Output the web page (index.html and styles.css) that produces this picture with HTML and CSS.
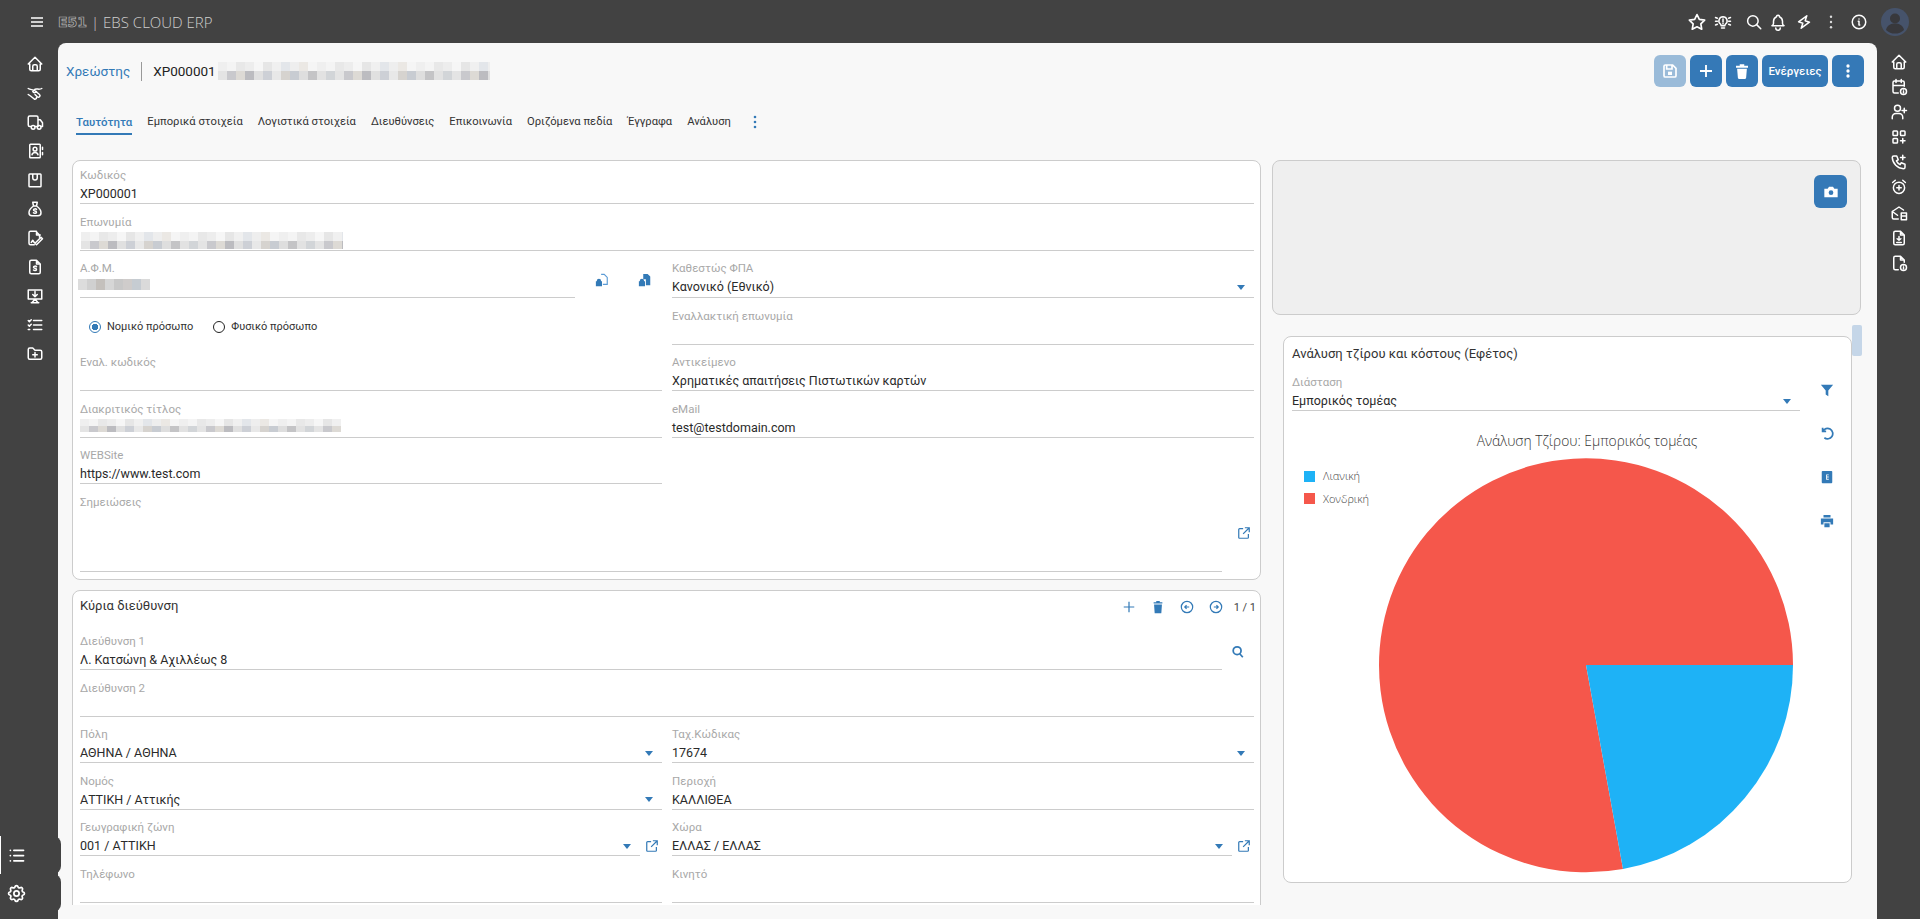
FILE: index.html
```html
<!DOCTYPE html>
<html lang="el">
<head>
    <meta charset="UTF-8">
    <title>Χρεώστης - EBS Cloud ERP</title>
    <link rel="stylesheet" href="styles.css">
</head>
<body>
    <header class="topbar">
        <svg class="burger" viewBox="0 0 12 10"><path d="M0 1h12M0 5h12M0 9h12"/></svg>
        <span class="logo-mark">E51</span>
        <span class="logo-text">| EBS CLOUD ERP</span>
        <div class="top-icons">
            <svg class="ic top-star" viewBox="0 0 24 24"><path d="M12 3l2.800 5.900 6.400.9-4.600 4.500 1.100 6.400L12 17.700l-5.700 3 1.100-6.400-4.600-4.500 6.400-.9z"/></svg>
            <svg class="ic" viewBox="0 0 24 24"><path d="M12 5a5.500 5.500 0 0 0-3.500 9.700c.6.6 1 1.300 1 2.300h5c0-1 .4-1.700 1-2.300A5.500 5.500 0 0 0 12 5zM10 20h4M12 8v4M12 14v.5M2 6l2.500 1M2 11h2.500M2 16l2.500-1M22 6l-2.500 1M22 11h-2.500M22 16l-2.500-1"/></svg>
            <svg class="ic" viewBox="0 0 24 24"><circle cx="10.500" cy="10.500" r="7"/><path d="M21 21l-5.500-5.500"/></svg>
            <svg class="ic" viewBox="0 0 24 24"><path d="M10 5a2 2 0 0 1 4 0 7 7 0 0 1 4 6v3a4 4 0 0 0 2 3H4a4 4 0 0 0 2-3v-3a7 7 0 0 1 4-6M9 20a3 3 0 0 0 6 0"/></svg>
            <svg class="ic" viewBox="0 0 24 24"><path d="M13 3v7h6l-8 11v-7H5z" transform="rotate(18 12 12)"/></svg>
            <svg class="ic ic-dots" viewBox="0 0 24 24"><circle cx="12" cy="5" r="1.600"/><circle cx="12" cy="12" r="1.600"/><circle cx="12" cy="19" r="1.600"/></svg>
            <svg class="ic" viewBox="0 0 24 24"><circle cx="12" cy="12" r="9"/><path d="M11 11h1v5h1M12 8v.01"/></svg>
            <svg class="avatar" viewBox="0 0 28 28"><circle cx="14" cy="14" r="14" fill="#46536b"/><circle cx="14" cy="10.500" r="5" fill="#38383c"/><path d="M5 22c1-5 5-6.500 9-6.500s8 1.500 9 6.500a13 13 0 0 1-18 0z" fill="#38383c"/></svg>
        </div>
    </header>

    <nav class="rail">
        <svg class="ic" viewBox="0 0 24 24"><path d="M5 12H3l9-9 9 9h-2M5 12v7a2 2 0 0 0 2 2h10a2 2 0 0 0 2-2v-7M9 21v-6a2 2 0 0 1 2-2h2a2 2 0 0 1 2 2v6"/></svg>
        <svg class="ic" viewBox="0 0 24 24"><path d="M3 6c3 2 6 1 9 3l6 5a2 2 0 0 1-3 3l-3-3M21 6c-3 2-6 0-9 1l-3 3c1 2 3 2 5 0M3 14l3 2 5 4a2 2 0 0 0 3-2"/></svg>
        <svg class="ic" viewBox="0 0 24 24"><path d="M7 18H5a2 2 0 0 1-2-2V6a2 2 0 0 1 2-2h9a2 2 0 0 1 2 2v12h-4M16 9h3l3 4v5h-2"/><circle cx="9.500" cy="19" r="2.500"/><circle cx="17.500" cy="19" r="2.500"/></svg>
        <svg class="ic" viewBox="0 0 24 24"><path d="M6 3h12a1 1 0 0 1 1 1v16a1 1 0 0 1-1 1H6a1 1 0 0 1-1-1V4a1 1 0 0 1 1-1zM8 17c.5-2 2-3 4-3s3.500 1 4 3M22 7v3M22 14v3"/><circle cx="12" cy="9.500" r="2.500"/></svg>
        <svg class="ic" viewBox="0 0 24 24"><path d="M5 4h14a1 1 0 0 1 1 1v15a1 1 0 0 1-1 1H5a1 1 0 0 1-1-1V5a1 1 0 0 1 1-1zM9 4v5a3 3 0 0 0 6 0V4"/></svg>
        <svg class="ic" viewBox="0 0 24 24"><path d="M9 3h6l-1 5h-4zM10 8c-3 2-6 6-6 9a4 4 0 0 0 4 4h8a4 4 0 0 0 4-4c0-3-3-7-6-9M14 12.500c-1-1-4-1-4 .8s4 1 4 2.900-3 1.800-4 .8"/></svg>
        <svg class="ic" viewBox="0 0 24 24"><path d="M14 3v5h5M18 11V8l-5-5H6a2 2 0 0 0-2 2v14a2 2 0 0 0 2 2h5M7 18l2-3 2 3M14 21l8-8-2-2-8 8z"/></svg>
        <svg class="ic" viewBox="0 0 24 24"><path d="M14 3v5h5M17 21H7a2 2 0 0 1-2-2V5a2 2 0 0 1 2-2h7l5 5v11a2 2 0 0 1-2 2zM14 11.500c-1-1-4-1-4 .8s4 1 4 2.900-3 1.800-4 .8"/></svg>
        <svg class="ic" viewBox="0 0 24 24"><path d="M3 4h18v12H3zM8 21l4-5 4 5M7 21h10M12 6v7M9 10l3 3 3-3"/></svg>
        <svg class="ic" viewBox="0 0 24 24"><path d="M3 6l1.500 1.500L7 5M3 12l1.500 1.500L7 11M3 18h2M10 6h11M10 12h11M10 18h11"/></svg>
        <svg class="ic" viewBox="0 0 24 24"><path d="M5 4h4l3 3h7a2 2 0 0 1 2 2v8a2 2 0 0 1-2 2H5a2 2 0 0 1-2-2V6a2 2 0 0 1 2-2zM12 10v6M9 13h6"/></svg>
        <div class="rail-tab rail-tab-active rail-tab-first">
            <svg class="ic" viewBox="0 0 24 24"><path d="M9 6h11M9 12h11M9 18h11M5 6v.01M5 12v.01M5 18v.01"/></svg>
        </div>
        <div class="rail-tab">
            <svg class="ic" viewBox="0 0 24 24"><path d="M10.300 4.300c.4-1.800 3-1.800 3.400 0a1.700 1.700 0 0 0 2.600 1.100c1.500-.9 3.300.8 2.400 2.400a1.700 1.700 0 0 0 1 2.500c1.800.4 1.800 3 0 3.400a1.700 1.700 0 0 0-1 2.600c.9 1.500-.9 3.300-2.400 2.400a1.700 1.700 0 0 0-2.600 1c-.4 1.800-3 1.800-3.400 0a1.700 1.700 0 0 0-2.600-1c-1.500.9-3.300-.9-2.400-2.400a1.700 1.700 0 0 0-1-2.600c-1.800-.4-1.800-3 0-3.400a1.700 1.700 0 0 0 1-2.500c-.9-1.600.9-3.300 2.400-2.400a1.700 1.700 0 0 0 2.600-1.100z"/><circle cx="12" cy="12" r="3"/></svg>
        </div>
    </nav>

    <main class="panel">
        <div class="panel-head">
            <a class="crumb">Χρεώστης</a>
            <span class="crumb-sep"></span>
            <span class="crumb-code">XP000001</span>
            <span class="mosaic mosaic-title"></span>
            <div class="actions">
                <button class="btn btn-off"><svg class="bi" viewBox="0 0 24 24"><path d="M5 3h11l5 5v11a2 2 0 0 1-2 2H5a2 2 0 0 1-2-2V5a2 2 0 0 1 2-2zM7 3v6h8V3" fill="none" stroke="#fff" stroke-width="2.500"/><rect x="9" y="13" width="6" height="5" fill="#fff"/></svg></button>
                <button class="btn"><svg class="bi" viewBox="0 0 24 24"><path d="M12 3v18M3 12h18" stroke="#fff" stroke-width="2.800"/></svg></button>
                <button class="btn"><svg class="bi bi-lg" viewBox="0 0 24 24"><path d="M4 5h16v2.500H4zM9 3h6v2H9zM5.500 9h13l-1 12a1.500 1.500 0 0 1-1.500 1.500H8A1.500 1.500 0 0 1 6.500 21z" fill="#fff"/></svg></button>
                <button class="btn btn-text">Ενέργειες</button>
                <button class="btn"><svg class="bi" viewBox="0 0 24 24"><circle cx="12" cy="4.500" r="2.500" fill="#fff"/><circle cx="12" cy="12" r="2.500" fill="#fff"/><circle cx="12" cy="19.500" r="2.500" fill="#fff"/></svg></button>
            </div>
        </div>

        <div class="tabs">
            <a class="tab tab-active">Ταυτότητα</a>
            <a class="tab">Εμπορικά στοιχεία</a>
            <a class="tab">Λογιστικά στοιχεία</a>
            <a class="tab">Διευθύνσεις</a>
            <a class="tab">Επικοινωνία</a>
            <a class="tab">Οριζόμενα πεδία</a>
            <a class="tab">Έγγραφα</a>
            <a class="tab">Ανάλυση</a>
            <svg class="tab-more" viewBox="0 0 4 14"><circle cx="2" cy="2" r="1.300"/><circle cx="2" cy="7" r="1.300"/><circle cx="2" cy="12" r="1.300"/></svg>
        </div>

        <div class="content">
            <div class="col-left">
                <section class="card">
                    <div class="fields">
                        <div class="field wide"><label>Κωδικός</label><div class="value">XP000001</div></div>
                        <div class="field wide"><label>Επωνυμία</label><div class="value"><span class="mosaic mosaic-name"></span></div></div>

                        <div class="with-action">
                            <div class="field"><label>Α.Φ.Μ.</label><div class="value"><span class="mosaic mosaic-afm"></span></div></div>
                            <div class="afm-tools">
                                <svg class="fi" viewBox="0 0 16 16"><path class="fi-outline" d="M7 1.500h3.500L14 5v8H9"/><path d="M2 9a2.500 2.500 0 0 1 5 0v.5h1V15H1V9.500h1z"/></svg>
                                <svg class="fi" viewBox="0 0 16 16"><path d="M6 1h5l3 3v10H9V7H6z"/><path d="M2 9a2.500 2.500 0 0 1 5 0v.5h1V15H1V9.500h1z"/></svg>
                            </div>
                        </div>
                        <div class="field"><label>Καθεστώς ΦΠΑ</label><div class="value select">Κανονικό (Εθνικό)<i class="caret"></i></div></div>

                        <div class="radios">
                            <span class="radio radio-on"></span><span class="radio-label">Νομικό πρόσωπο</span>
                            <span class="radio"></span><span class="radio-label">Φυσικό πρόσωπο</span>
                        </div>
                        <div class="field"><label>Εναλλακτική επωνυμία</label><div class="value"></div></div>

                        <div class="field"><label>Εναλ. κωδικός</label><div class="value"></div></div>
                        <div class="field"><label>Αντικείμενο</label><div class="value">Χρηματικές απαιτήσεις Πιστωτικών καρτών</div></div>

                        <div class="field"><label>Διακριτικός τίτλος</label><div class="value"><span class="mosaic mosaic-brand"></span></div></div>
                        <div class="field"><label>eMail</label><div class="value">test@testdomain.com</div></div>

                        <div class="field"><label>WEBSite</label><div class="value">https://www.test.com</div></div>
                        <div></div>

                        <div class="with-action wide">
                            <div class="field field-notes"><label>Σημειώσεις</label><div class="value"></div></div>
                            <div class="action-box"><svg class="fi-line" viewBox="0 0 16 16"><path d="M13 9v4a1 1 0 0 1-1 1H3a1 1 0 0 1-1-1V4a1 1 0 0 1 1-1h4M9 2h5v5M14 2L7 9"/></svg></div>
                        </div>
                    </div>
                </section>

                <section class="card card-address">
                    <div class="card-head">
                        <h3>Κύρια διεύθυνση</h3>
                        <div class="card-tools">
                            <svg class="fi-line" viewBox="0 0 16 16"><path d="M8 2v12M2 8h12"/></svg>
                            <svg class="fi" viewBox="0 0 16 16"><path d="M3 2.500h10V4H3zM6 1h4v1.500H6zM3.500 5h9l-.7 10H4.200z"/></svg>
                            <svg class="fi-line" viewBox="0 0 16 16"><circle cx="8" cy="8" r="6.500"/><path d="M10.500 8h-5M7.500 6l-2 2 2 2"/></svg>
                            <svg class="fi-line" viewBox="0 0 16 16"><circle cx="8" cy="8" r="6.500"/><path d="M5.500 8h5M8.500 6l2 2-2 2"/></svg>
                            <span class="pager">1 / 1</span>
                        </div>
                    </div>
                    <div class="fields">
                        <div class="with-action wide">
                            <div class="field"><label>Διεύθυνση 1</label><div class="value">Λ. Κατσώνη &amp; Αχιλλέως 8</div></div>
                            <div class="action-box action-search"><svg class="fi-line fi-bold" viewBox="0 0 16 16"><circle cx="7" cy="6.500" r="4.500"/><path d="M10 10l3.500 4"/></svg></div>
                        </div>
                        <div class="field wide"><label>Διεύθυνση 2</label><div class="value"></div></div>

                        <div class="field"><label>Πόλη</label><div class="value select">ΑΘΗΝΑ / ΑΘΗΝΑ<i class="caret"></i></div></div>
                        <div class="field"><label>Ταχ.Κώδικας</label><div class="value select">17674<i class="caret"></i></div></div>

                        <div class="field"><label>Νομός</label><div class="value select">ΑΤΤΙΚΗ / Αττικής<i class="caret"></i></div></div>
                        <div class="field"><label>Περιοχή</label><div class="value">ΚΑΛΛΙΘΕΑ</div></div>

                        <div class="with-action">
                            <div class="field"><label>Γεωγραφική ζώνη</label><div class="value select">001 / ΑΤΤΙΚΗ<i class="caret"></i></div></div>
                            <div class="action-box action-small"><svg class="fi-line" viewBox="0 0 16 16"><path d="M13 9v4a1 1 0 0 1-1 1H3a1 1 0 0 1-1-1V4a1 1 0 0 1 1-1h4M9 2h5v5M14 2L7 9"/></svg></div>
                        </div>
                        <div class="with-action">
                            <div class="field"><label>Χώρα</label><div class="value select">ΕΛΛΑΣ / ΕΛΛΑΣ<i class="caret"></i></div></div>
                            <div class="action-box action-small"><svg class="fi-line" viewBox="0 0 16 16"><path d="M13 9v4a1 1 0 0 1-1 1H3a1 1 0 0 1-1-1V4a1 1 0 0 1 1-1h4M9 2h5v5M14 2L7 9"/></svg></div>
                        </div>

                        <div class="field"><label>Τηλέφωνο</label><div class="value"></div></div>
                        <div class="field"><label>Κινητό</label><div class="value"></div></div>
                    </div>
                </section>
            </div>

            <div class="col-right">
                <section class="photo-card">
                    <button class="btn btn-camera"><svg class="bi" viewBox="0 0 24 24"><path d="M2 7h5l2-3h6l2 3h5v13H2z" fill="#fff"/><circle cx="12" cy="13" r="3.500" fill="#3579b7"/></svg></button>
                </section>
                <span class="scroll-thumb"></span>
                <section class="chart-card">
                    <div class="chart-main">
                        <h3 class="chart-head">Ανάλυση τζίρου και κόστους (Εφέτος)</h3>
                        <div class="field chart-field"><label>Διάσταση</label><div class="value select">Εμπορικός τομέας<i class="caret"></i></div></div>
                        <svg class="chart" viewBox="0 0 516 460">
                            <text class="chart-title" x="303" y="26">Ανάλυση Τζίρου: Εμπορικός τομέας</text>
                            <rect x="20" y="51" width="11" height="11" fill="#1eb2f6"/>
                            <text class="chart-legend" x="39" y="60">Λιανική</text>
                            <rect x="20" y="73" width="11" height="11" fill="#f5574b"/>
                            <text class="chart-legend" x="39" y="83">Χονδρική</text>
                            <path d="M302 245L339 449A207 207 0 1 1 509 245Z" fill="#f5574b"/>
                            <path d="M302 245H509A207 207 0 0 1 339 449Z" fill="#1eb2f6"/>
                        </svg>
                    </div>
                    <div class="chart-tools">
                        <span><svg class="fi" viewBox="0 0 16 16"><path d="M1 2h14L9.500 8.500V15l-3-2V8.500z"/></svg></span>
                        <span><svg class="fi-line fi-bold" viewBox="0 0 16 16"><path d="M3 2v4h4M3.200 6A6 6 0 1 1 5 13.500"/></svg></span>
                        <span><svg class="fi" viewBox="0 0 16 16"><path d="M3 1h10a1 1 0 0 1 1 1v12a1 1 0 0 1-1 1H3a1 1 0 0 1-1-1V2a1 1 0 0 1 1-1zM7 5v6h3v-1H8V8.500h2v-1H8V6h2V5z" fill-rule="evenodd"/></svg></span>
                        <span><svg class="fi" viewBox="0 0 16 16"><path d="M4 1h8v3H4zM1 5h14v7h-3V9.500H4V12H1zM5 10.500h6V15H5z"/></svg></span>
                    </div>
                </section>
            </div>
        </div>
    </main>

    <aside class="rail-right">
        <svg class="ic" viewBox="0 0 24 24"><path d="M5 12H3l9-9 9 9h-2M5 12v7a2 2 0 0 0 2 2h10a2 2 0 0 0 2-2v-7M9 21v-6a2 2 0 0 1 2-2h2a2 2 0 0 1 2 2v6"/></svg>
        <svg class="ic" viewBox="0 0 24 24"><path d="M11 20H6a2 2 0 0 1-2-2V6a2 2 0 0 1 2-2h11a2 2 0 0 1 2 2v5M8 2v4M15 2v4M4 10h15"/><circle cx="18" cy="18" r="4"/><path d="M18 16v.01M18 18v2"/></svg>
        <svg class="ic" viewBox="0 0 24 24"><circle cx="10" cy="7" r="4"/><path d="M3 21v-2a5 5 0 0 1 5-5h4a5 5 0 0 1 5 5v2M19 7v6M16 10h6"/></svg>
        <svg class="ic" viewBox="0 0 24 24"><rect x="4" y="4" width="6" height="6" rx="1"/><rect x="14" y="4" width="6" height="6" rx="1"/><rect x="4" y="14" width="6" height="6" rx="1"/><path d="M17 14v6M14 17h6"/></svg>
        <svg class="ic" viewBox="0 0 24 24"><path d="M5 4h4l2 5-2.500 1.500a11 11 0 0 0 5 5L15 13l5 2v4a2 2 0 0 1-2 2A16 16 0 0 1 3 6a2 2 0 0 1 2-2zM17 3v6M14 6h6"/></svg>
        <svg class="ic" viewBox="0 0 24 24"><circle cx="12" cy="13" r="7.500"/><path d="M7 3L3.500 6M17 3l3.500 3M12 10v6M9 13h6"/></svg>
        <svg class="ic" viewBox="0 0 24 24"><path d="M11 20H5a2 2 0 0 1-2-2v-8l9-6 6 4M3 10l7 5M15 12h7v9h-7zM15 16h7"/></svg>
        <svg class="ic" viewBox="0 0 24 24"><path d="M14 3v5h5M17 21H7a2 2 0 0 1-2-2V5a2 2 0 0 1 2-2h7l5 5v11a2 2 0 0 1-2 2zM12 10v5M9.500 13l2.500 2 2.500-2M9 18h6"/></svg>
        <svg class="ic" viewBox="0 0 24 24"><path d="M14 3v5h5M11 21H7a2 2 0 0 1-2-2V5a2 2 0 0 1 2-2h7l5 5v3"/><circle cx="18" cy="18" r="4"/><path d="M18 16v.01M18 18v2"/></svg>
    </aside>
</body>
</html>
```

FILE: styles.css
```css
* {
    box-sizing: border-box;
}

body {
    margin: 0;
    height: 100vh;
    overflow: hidden;
    display: grid;
    grid-template-columns: 58px 1fr 43px;
    grid-template-rows: 43px 1fr;
    background-color: #424242;
    font-family: Roboto, "Noto Sans", sans-serif;
    font-size: 12.5px;
    color: #222;
}

/* shared icon style for the dark bars */
.ic {
    width: 18px;
    height: 18px;
    fill: none;
    stroke: #fff;
    stroke-width: 2;
    stroke-linecap: round;
    stroke-linejoin: round;
}

/* Top bar */
.topbar {
    grid-column: 1 / -1;
    display: flex;
    align-items: center;
    padding-left: 31px;
}

.burger {
    width: 12px;
    height: 10px;
    fill: none;
    stroke: #fff;
    stroke-width: 1.6;
}

.logo-mark {
    margin-left: 15px;
    font-family: "DejaVu Sans", sans-serif;
    font-size: 14px;
    font-weight: bold;
    color: transparent;
    -webkit-text-stroke: 0.7px #b8b8b8;
}

.logo-text {
    margin-left: 4px;
    font-family: "Open Sans", sans-serif;
    font-weight: 300;
    font-size: 15px;
    color: #cfcfcf;
}

.top-icons {
    margin-left: auto;
    padding-right: 11px;
    display: flex;
    align-items: center;
}

.top-icons .ic:nth-child(2) { margin-left: 7px; }
.top-icons .ic:nth-child(3) { margin-left: 13px; }
.top-icons .ic:nth-child(4) { margin-left: 6px; }
.top-icons .ic:nth-child(5) { margin-left: 8px; }
.top-icons .ic:nth-child(6) { margin-left: 9px; }
.top-icons .ic:nth-child(7) { margin-left: 10px; }

.top-star {
    width: 20px;
    height: 20px;
}

.ic-dots {
    fill: #ddd;
    stroke: none;
}

.avatar {
    width: 28px;
    height: 28px;
    margin-left: 13px;
}

/* Left and right rails */
.rail {
    display: flex;
    flex-direction: column;
    align-items: center;
    padding: 12px 0 7px;
    row-gap: 11px;
}

.rail > .ic {
    flex: none;
    margin-left: 12px;
}

.rail-tab {
    position: relative;
    z-index: 1;
    align-self: flex-start;
    width: 61px;
    height: 38px;
    margin-top: -11px;
    padding-left: 6px;
    display: flex;
    align-items: center;
    background-color: #424242;
    border-radius: 0 8px 8px 0;
}

.rail-tab .ic {
    width: 21px;
    height: 21px;
}

.rail-tab-first {
    margin-top: auto;
}

.rail-tab-active {
    border-left: 1px solid #fff;
    padding-left: 5px;
}

.rail-right {
    display: flex;
    flex-direction: column;
    align-items: center;
    padding-top: 10px;
    row-gap: 7.1px;
}

/* Main panel */
.panel {
    display: flex;
    flex-direction: column;
    min-width: 0;
    min-height: 0;
    padding-bottom: 14px;
    background-color: #f8f8f8;
    border-radius: 8px 8px 0 0;
}

.panel-head {
    display: flex;
    align-items: center;
    margin-top: 12px;
    padding: 0 13px 0 8px;
}

.crumb {
    font-size: 13.5px;
    color: #337ab7;
}

.crumb-sep {
    width: 1px;
    height: 19px;
    margin: 0 11px;
    background-color: #999;
}

.crumb-code {
    font-size: 13.5px;
    margin-right: 2px;
}

.actions {
    margin-left: auto;
    display: flex;
    gap: 4px;
}

.btn {
    width: 32px;
    height: 32px;
    padding: 0;
    display: flex;
    align-items: center;
    justify-content: center;
    border: 0;
    border-radius: 6px;
    background-color: #3579b7;
    color: #fff;
    font-family: inherit;
}

.btn-off {
    background-color: #9abbd9;
}

.btn-text {
    width: 66px;
    font-size: 11.5px;
    font-weight: 500;
}

.bi {
    width: 16px;
    height: 16px;
}

.bi-lg {
    width: 18px;
    height: 18px;
}

/* Pixelated (blurred in the source) text */
.mosaic {
    display: block;
    background-image:
        linear-gradient(90deg, #efefef 0 9px, #f4f4f4 0 18px, #e8e8e8 0 27px, #ededed 0 36px, #f6f6f6 0 45px, #e6e6e6 0 54px, #f0f0f0 0 63px, #e3e6ea 0 72px, #eeeeee 0 81px, #ebe8e4 0 90px, #f5f5f5 0 99px),
        linear-gradient(90deg, #e4e4e4 0 9px, #c9c9cd 0 18px, #dddad5 0 27px, #bcbcc0 0 36px, #e0e0e0 0 45px, #cdd0d6 0 54px, #e8e8e8 0 63px, #d6d3cf 0 72px, #c8ccd2 0 81px, #dedede 0 90px, #c4c4c6 0 99px, #e2e2e2 0 108px, #d2d5d8 0 117px);
    background-size: 99px 50%, 117px 50%;
    background-position: 0 0, 0 100%;
    background-repeat: repeat-x;
}

.mosaic-title {
    width: 272px;
    height: 18px;
}

.mosaic-name {
    width: 262px;
    height: 17px;
    margin-left: 1px;
}

.mosaic-afm {
    width: 72px;
    height: 11px;
    margin: 4px 0 0 -2px;
    background-image: linear-gradient(90deg, #dcdcdc 0 9px, #d0d0d0 0 18px, #c4c0bc 0 27px, #d6d6d6 0 36px, #c8c8c8 0 45px, #cfcccb 0 54px, #c6ccd2 0 63px, #dadada 0 72px);
    background-size: 100% 100%;
}

.mosaic-brand {
    width: 261px;
    height: 13px;
}

/* Tabs */
.tabs {
    display: flex;
    align-items: flex-start;
    gap: 15px;
    margin: 27px 0 0 18px;
}

.tab {
    height: 21px;
    line-height: 16px;
    font-size: 11.2px;
    color: #333;
}

.tab-active {
    font-size: 11.5px;
    font-weight: 500;
    color: #337ab7;
    border-bottom: 2px solid #337ab7;
}

.tab-more {
    width: 4px;
    height: 14px;
    margin: 1px 0 0 7px;
    fill: #337ab7;
}

/* Columns */
.content {
    flex: 1;
    min-height: 0;
    overflow: hidden;
    display: grid;
    grid-template-columns: 1189px 589px;
    column-gap: 11px;
    margin-top: 25px;
    padding-left: 14px;
}

.col-left {
    display: flex;
    flex-direction: column;
    gap: 10px;
}

.col-right {
    position: relative;
}

/* Cards and form fields */
.card {
    flex: none;
    padding: 7px 6px 7px 7px;
    background-color: #fff;
    border: 1px solid #ccc;
    border-radius: 8px;
}

.card-address {
    padding-top: 0;
    padding-bottom: 40px;
}

.card-head {
    display: flex;
    align-items: center;
    height: 33px;
    margin-bottom: 10.5px;
}

.card-head h3 {
    margin: -3px 0 0;
}

.card-head h3,
.chart-head {
    font-size: 13px;
    font-weight: 400;
    color: #333;
}

.card-tools {
    margin-left: auto;
    margin-right: -2px;
    display: flex;
    align-items: center;
    gap: 15px;
}

.pager {
    margin-left: -4px;
    font-size: 11px;
    color: #444;
}

.fields {
    display: grid;
    grid-template-columns: 582px 1fr;
    column-gap: 10px;
    row-gap: 10.5px;
}

.wide {
    grid-column: 1 / -1;
}

.field {
    flex: 1;
    min-width: 0;
    border-bottom: 1px solid #ccc;
}

.field label {
    display: block;
    height: 14px;
    line-height: 14px;
    margin-bottom: 3px;
    font-size: 11.5px;
    color: #a8a8a8;
}

.value {
    height: 18px;
    line-height: 18px;
    font-size: 12.5px;
    color: #2a2a2a;
}

.select {
    display: flex;
    align-items: center;
    justify-content: space-between;
    padding-right: 9px;
}

.caret {
    width: 0;
    height: 0;
    border-left: 4.5px solid transparent;
    border-right: 4.5px solid transparent;
    border-top: 5px solid #337ab7;
}

.with-action {
    display: flex;
    min-width: 0;
}

.action-box {
    flex: none;
    width: 32px;
    display: flex;
    align-items: center;
    justify-content: flex-end;
    padding-right: 3px;
}

.action-small {
    width: 22px;
    padding: 16px 3px 0 0;
}

.action-search {
    padding-right: 9px;
}

.afm-tools {
    flex: none;
    width: 87px;
    display: flex;
    align-items: center;
    gap: 29px;
    padding: 0 0 0 20px;
}

.field-notes {
    height: 77px;
}

.field-notes .value {
    height: 59px;
}

.fi {
    flex: none;
    width: 14px;
    height: 14px;
    fill: #337ab7;
}

.fi-outline {
    fill: none;
    stroke: #5b9bd5;
    stroke-width: 1.3;
}

.fi-line {
    flex: none;
    width: 14px;
    height: 14px;
    fill: none;
    stroke: #337ab7;
    stroke-width: 1.4;
}

.fi-bold {
    stroke-width: 2;
}

.radios {
    display: flex;
    align-items: center;
    padding-left: 9px;
}

.radio {
    width: 12px;
    height: 12px;
    border: 1.5px solid #222;
    border-radius: 50%;
    margin-right: 6px;
}

.radio-on {
    border-color: #337ab7;
    background: radial-gradient(circle, #337ab7 0 3px, #fff 3.500px);
}

.radio-label {
    margin-right: 20px;
    font-size: 11px;
    color: #333;
}

/* Right column */
.photo-card {
    height: 155px;
    display: flex;
    justify-content: flex-end;
    padding: 14px 13px 0 0;
    background-color: #efefef;
    border: 1px solid #ccc;
    border-radius: 8px;
}

.btn-camera {
    width: 33px;
    height: 33px;
}

.scroll-thumb {
    position: absolute;
    top: 165px;
    left: 580px;
    width: 10px;
    height: 31px;
    border-radius: 2px;
    background-color: #c5d6e8;
}

.chart-card {
    display: flex;
    width: 569px;
    height: 547px;
    margin: 21px 0 0 11px;
    background-color: #fff;
    border: 1px solid #ccc;
    border-radius: 8px;
}

.chart-main {
    flex: none;
    width: 516px;
}

.chart-head {
    height: 38px;
    line-height: 34px;
    margin: 0 0 0 8px;
}

.chart-field {
    flex: none;
    margin-left: 8px;
}

.chart {
    display: block;
    width: 516px;
    height: 460px;
    margin-top: 9px;
}

.chart-title {
    font-family: "Open Sans", sans-serif;
    font-weight: 300;
    font-size: 13.8px;
    text-anchor: middle;
    fill: #333;
}

.chart-legend {
    font-family: "Open Sans", sans-serif;
    font-weight: 300;
    font-size: 11px;
    fill: #444;
}

.chart-tools {
    flex: 1;
    display: flex;
    flex-direction: column;
    padding-top: 31px;
}

.chart-tools span {
    height: 43.67px;
    padding-left: 20px;
    display: flex;
    align-items: center;
}
```
